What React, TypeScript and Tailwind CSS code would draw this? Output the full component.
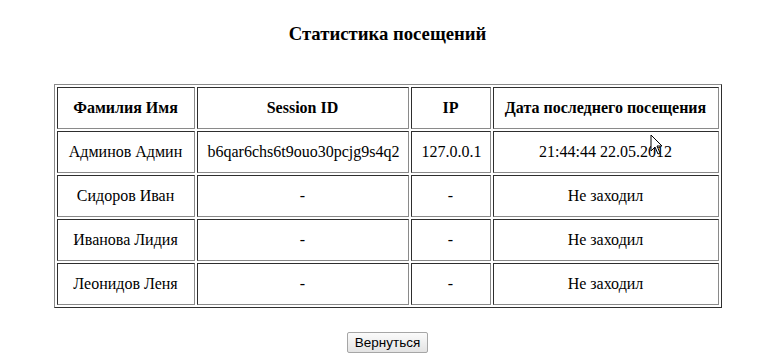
const rows = [
  { name: "Админов Админ", session: "b6qar6chs6t9ouo30pcjg9s4q2", ip: "127.0.0.1", date: "21:44:44 22.05.2012" },
  { name: "Сидоров Иван", session: "-", ip: "-", date: "Не заходил" },
  { name: "Иванова Лидия", session: "-", ip: "-", date: "Не заходил" },
  { name: "Леонидов Леня", session: "-", ip: "-", date: "Не заходил" },
]

const cell =
  "h-[42px] border border-t-[#2e2e2e] border-l-[#2e2e2e] border-b-[#8a8a8a] border-r-[#8a8a8a] px-[10px] text-center align-middle"

export default function App() {
  return (
    <div
      className="relative min-h-[364px] bg-white pl-[5px] text-black"
      style={{ fontFamily: '"Liberation Serif", "Times New Roman", serif' }}
    >
      <h3 className="pt-[23px] text-center text-[18.72px] leading-[22px] font-bold">Статистика посещений</h3>

      <table
        className="mx-auto mt-[39px] table-fixed border-separate border-spacing-[2px] border border-t-[#8a8a8a] border-l-[#8a8a8a] border-b-[#2e2e2e] border-r-[#2e2e2e] text-[16px]"
        style={{ width: 668 }}
      >
        <colgroup>
          <col style={{ width: 138 }} />
          <col style={{ width: 212 }} />
          <col style={{ width: 80 }} />
          <col />
        </colgroup>
        <thead>
          <tr>
            <th className={`${cell} font-bold`}>Фамилия Имя</th>
            <th className={`${cell} font-bold`}>Session ID</th>
            <th className={`${cell} font-bold`}>IP</th>
            <th className={`${cell} font-bold whitespace-nowrap`}>Дата последнего посещения</th>
          </tr>
        </thead>
        <tbody>
          {rows.map((r) => (
            <tr key={r.name}>
              <td className={`${cell} whitespace-nowrap`}>{r.name}</td>
              <td className={`${cell} whitespace-nowrap`}>{r.session}</td>
              <td className={cell}>{r.ip}</td>
              <td className={cell}>{r.date}</td>
            </tr>
          ))}
        </tbody>
      </table>

      <div className="mt-[24px] flex justify-center">
        <button
          className="h-[21px] rounded-[2px] border border-[#a6a6a6] bg-gradient-to-b from-[#fbfbfb] to-[#e3e3e3] px-[7px] text-[13.5px] leading-none text-black"
          style={{ fontFamily: '"Liberation Sans", Arial, sans-serif' }}
        >
          Вернуться
        </button>
      </div>

      {/* mouse pointer */}
      <svg className="absolute left-[650px] top-[134px]" width="14" height="22" viewBox="0 0 14 22">
        <path d="M1 1 L1 17 L5 13 L8 20 L10 19 L7 12 L12 12 Z" fill="white" stroke="black" strokeWidth="1" />
      </svg>
    </div>
  )
}
